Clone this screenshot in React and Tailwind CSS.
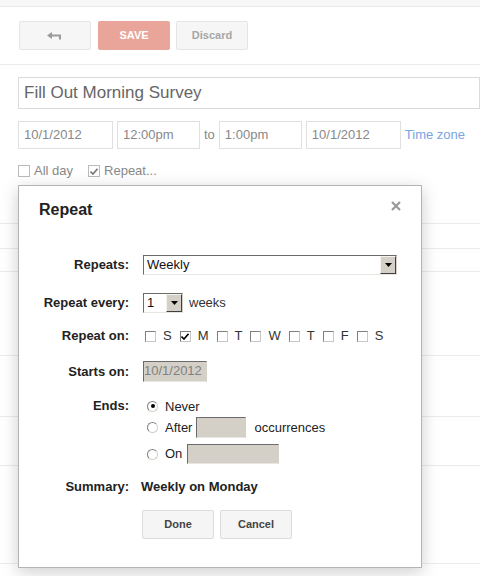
import React from "react";

const font = "font-['Liberation_Sans',Arial,sans-serif]";

function ClassicSelect({ value, width }) {
  return (
    <div
      className={`flex h-[20px] items-stretch border border-t-[#6b6b6b] border-l-[#6b6b6b] border-r-[#d4d0c8] border-b-[#e8e6e0] bg-white ${width}`}
    >
      <div className="flex-1 pl-[3px] text-[13px] leading-[18px] text-[#111]">{value}</div>
      <div className="flex w-[16px] items-center justify-center border border-t-[#f4f3ef] border-l-[#f4f3ef] border-r-[#404040] border-b-[#404040] bg-[#d4d0c8]">
        <svg width="7" height="4" viewBox="0 0 7 4">
          <path d="M0 0h7L3.5 4z" fill="#000" />
        </svg>
      </div>
    </div>
  );
}

function ClassicCheck({ checked }) {
  return (
    <div className="flex h-[11px] w-[11px] items-center justify-center border border-t-[#808080] border-l-[#808080] border-r-[#c8c8c8] border-b-[#c8c8c8] bg-white">
      {checked && (
        <svg width="8" height="7" viewBox="0 0 8 7">
          <path d="M0.5 3.5L3 6L7.5 0.8" stroke="#000" strokeWidth="1.6" fill="none" />
        </svg>
      )}
    </div>
  );
}

function ClassicRadio({ checked }) {
  return (
    <div className="flex h-[11px] w-[11px] items-center justify-center rounded-full border border-t-[#808080] border-l-[#808080] border-r-[#d4d0c8] border-b-[#d4d0c8] bg-white">
      {checked && <div className="h-[4px] w-[4px] rounded-full bg-black" />}
    </div>
  );
}

function GrayInput({ value, width }) {
  return (
    <div
      className={`border border-t-[#6b6b6b] border-l-[#6b6b6b] border-r-[#d4d0c8] border-b-[#e8e6e0] bg-[#d4d0c8] text-[13px] leading-[18px] text-[#808080] ${width}`}
    >
      {value}
    </div>
  );
}

function Label({ children }) {
  return (
    <div className="w-[110px] shrink-0 text-right text-[13px] font-bold text-[#222]">{children}</div>
  );
}

const days = [
  { d: "S", c: false },
  { d: "M", c: true },
  { d: "T", c: false },
  { d: "W", c: false },
  { d: "T", c: false },
  { d: "F", c: false },
  { d: "S", c: false },
];

export default function App() {
  return (
    <div className={`relative h-[576px] w-[480px] overflow-hidden bg-white ${font}`}>
      <div className="h-[7px] border-b border-[#e8e8e8] bg-[#f7f7f7]" />

      <div className="ml-[19px] mt-[14px] flex h-[29px] gap-[7px]">
        <div className="flex w-[72px] items-center justify-center rounded-[2px] border border-[#e5e5e5] bg-[#f6f6f6]">
          <svg width="16" height="10" viewBox="0 0 16 10">
            <path d="M0 4.5L5 1v7z" fill="#9a9a9a" />
            <path d="M4 4.5h9v4" stroke="#9a9a9a" strokeWidth="2" fill="none" />
          </svg>
        </div>
        <div className="flex w-[72px] items-center justify-center rounded-[2px] bg-[#eaa59b] text-[11px] font-bold text-white">
          SAVE
        </div>
        <div className="ml-[-1px] flex w-[72px] items-center justify-center rounded-[2px] border border-[#e5e5e5] bg-[#f6f6f6] text-[11px] font-bold text-[#a6a6a6]">
          Discard
        </div>
      </div>

      <div className="mt-[14px] h-px bg-[#ebebeb]" />

      <div className="ml-[18px] mt-[12px] flex h-[32px] w-[462px] items-center border border-[#dadada] pl-[5px] text-[17px] text-[#666]">
        Fill Out Morning Survey
      </div>

      <div className="ml-[18px] mt-[12px] flex h-[28px] items-center text-[13px] text-[#888]">
        <div className="flex h-full w-[95px] items-center border border-[#e0e0e0] pl-[5px]">10/1/2012</div>
        <div className="ml-[4px] flex h-full w-[83px] items-center border border-[#e0e0e0] pl-[5px]">12:00pm</div>
        <div className="ml-[4px] text-[#888]">to</div>
        <div className="ml-[4px] flex h-full w-[83px] items-center border border-[#e0e0e0] pl-[5px]">1:00pm</div>
        <div className="ml-[4px] flex h-full w-[95px] items-center border border-[#e0e0e0] pl-[5px]">10/1/2012</div>
        <div className="ml-[4px] text-[#7aa3e2]">Time zone</div>
      </div>

      <div className="ml-[18px] mt-[15px] flex h-[14px] items-center text-[13px] text-[#888]">
        <div className="h-[12px] w-[12px] border border-[#bbb] bg-white" />
        <span className="ml-[4px]">All day</span>
        <div className="ml-[15px] flex h-[12px] w-[12px] items-center justify-center border border-[#bbb] bg-white">
          <svg width="8" height="7" viewBox="0 0 8 7">
            <path d="M0.5 3.5L3 6L7.5 0.8" stroke="#777" strokeWidth="1.6" fill="none" />
          </svg>
        </div>
        <span className="ml-[4px]">Repeat...</span>
      </div>

      <div>
        <div className="h-[46px] border-b border-[#ebebeb]" />
        <div className="h-[25px] border-b border-[#ebebeb]" />
        <div className="h-[23px] border-b border-[#ebebeb]" />
        <div className="h-[84px] border-b border-[#ebebeb]" />
        <div className="h-[61px] border-b border-[#ebebeb]" />
        <div className="h-[49px] border-b border-[#ebebeb]" />
        <div className="h-[98px] border-b border-[#ebebeb]" />
      </div>

      <div className="absolute left-[18px] top-[185px] h-[383px] w-[404px] border border-[#b4b4b4] bg-white pt-[14px] shadow-[0_4px_16px_rgba(0,0,0,0.2)]">
        <div className="relative flex h-[20px] items-center pl-[20px] text-[16px] font-bold text-[#222]">
          Repeat
          <svg className="absolute right-[20px] top-[1px]" width="10" height="10" viewBox="0 0 10 10">
            <path d="M1 1l8 8M9 1l-8 8" stroke="#999" strokeWidth="2.2" />
          </svg>
        </div>

        <div className="mt-[35px] flex h-[20px] items-center gap-[14px]">
          <Label>Repeats:</Label>
          <ClassicSelect value="Weekly" width="w-[254px]" />
        </div>

        <div className="mt-[18px] flex h-[20px] items-center gap-[14px]">
          <Label>Repeat every:</Label>
          <ClassicSelect value="1" width="w-[40px]" />
          <span className="ml-[-8px] text-[13px] text-[#333]">weeks</span>
        </div>

        <div className="mt-[15px] flex h-[16px] items-center gap-[14px]">
          <Label>Repeat on:</Label>
          <div className="ml-[2px] flex items-center gap-[8px]">
            {days.map((x, i) => (
              <div key={i} className="flex items-center gap-[7px]">
                <ClassicCheck checked={x.c} />
                <span className="text-[13px] text-[#333]">{x.d}</span>
              </div>
            ))}
          </div>
        </div>

        <div className="mt-[17px] flex h-[21px] items-center gap-[14px]">
          <Label>Starts on:</Label>
          <GrayInput value="10/1/2012" width="w-[64px] h-[21px]" />
        </div>

        <div className="mt-[14px] flex gap-[14px]">
          <div className="flex h-[20px] items-center">
            <Label>Ends:</Label>
          </div>
          <div className="flex flex-col text-[13px] text-[#222]">
            <div className="flex h-[20px] items-center">
              <div className="ml-[4px]">
                <ClassicRadio checked />
              </div>
              <span className="ml-[7px] mt-[2px]">Never</span>
            </div>
            <div className="mt-[1px] flex h-[21px] items-center">
              <div className="ml-[4px]">
                <ClassicRadio />
              </div>
              <span className="ml-[7px]">After</span>
              <GrayInput value="" width="ml-[4px] w-[50px] h-[21px]" />
              <span className="ml-[8px]">occurrences</span>
            </div>
            <div className="mt-[6px] flex h-[20px] items-center">
              <div className="ml-[4px]">
                <ClassicRadio />
              </div>
              <span className="ml-[7px]">On</span>
              <GrayInput value="" width="ml-[5px] w-[92px] h-[20px]" />
            </div>
          </div>
        </div>

        <div className="mt-[15px] flex h-[16px] items-center gap-[12px] text-[13px] font-bold text-[#222]">
          <div className="w-[110px] text-right">Summary:</div>
          <div>Weekly on Monday</div>
        </div>

        <div className="ml-[123px] mt-[15px] flex h-[29px] gap-[6px]">
          <div className="flex w-[72px] items-center justify-center rounded-[2px] border border-[#dcdcdc] bg-[#f5f5f5] text-[11px] font-bold text-[#444]">
            Done
          </div>
          <div className="flex w-[72px] items-center justify-center rounded-[2px] border border-[#dcdcdc] bg-[#f5f5f5] text-[11px] font-bold text-[#444]">
            Cancel
          </div>
        </div>
      </div>
    </div>
  );
}
